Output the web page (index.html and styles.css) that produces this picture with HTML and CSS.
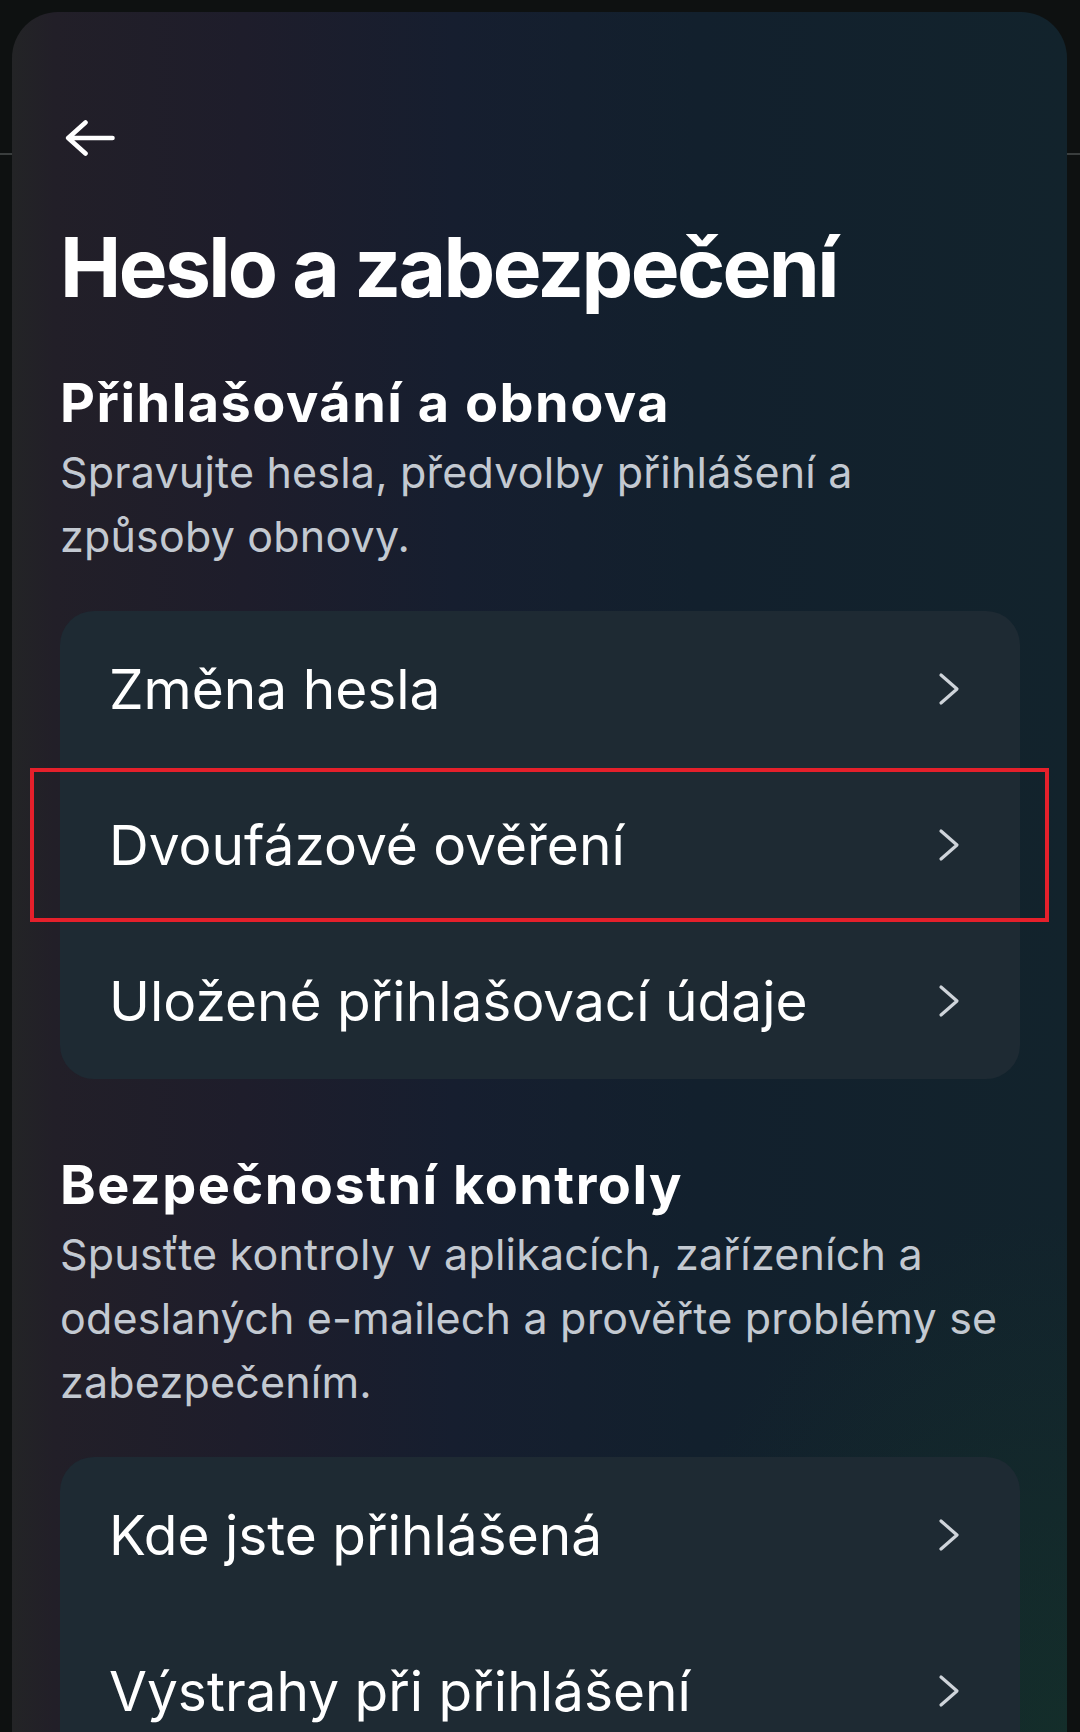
FILE: index.html
```html
<!DOCTYPE html>
<html lang="cs">
<head>
<meta charset="utf-8">
<title>Heslo a zabezpečení</title>
<link rel="stylesheet" href="styles.css">
</head>
<body>
<main class="panel">
  <button class="back" aria-label="Zpět">
    <svg width="50" height="36" viewBox="0 0 50 36" fill="none" stroke="#ffffff" stroke-width="4.6" stroke-linecap="round" stroke-linejoin="round"><path d="M47.5 18 H3.5 M20.5 2.5 L3.2 18 L20.5 33.5"/></svg>
  </button>
  <h1 class="title">Heslo a zabezpečení</h1>

  <section class="group group-first">
    <h2 class="group-title">Přihlašování a obnova</h2>
    <p class="group-desc">Spravujte hesla, předvolby přihlášení a způsoby obnovy.</p>
    <ul class="card">
      <li class="row"><span class="row-label">Změna hesla</span><svg class="chev" width="22" height="34" viewBox="0 0 22 34" fill="none"><path d="M3 3 L19 17 L3 31"/></svg></li>
      <li class="row row-marked"><span class="row-label">Dvoufázové ověření</span><svg class="chev" width="22" height="34" viewBox="0 0 22 34" fill="none"><path d="M3 3 L19 17 L3 31"/></svg></li>
      <li class="row"><span class="row-label">Uložené přihlašovací údaje</span><svg class="chev" width="22" height="34" viewBox="0 0 22 34" fill="none"><path d="M3 3 L19 17 L3 31"/></svg></li>
    </ul>
  </section>

  <section class="group group-second">
    <h2 class="group-title">Bezpečnostní kontroly</h2>
    <p class="group-desc">Spusťte kontroly v aplikacích, zařízeních a odeslaných e-mailech a prověřte problémy se zabezpečením.</p>
    <ul class="card">
      <li class="row"><span class="row-label">Kde jste přihlášená</span><svg class="chev" width="22" height="34" viewBox="0 0 22 34" fill="none"><path d="M3 3 L19 17 L3 31"/></svg></li>
      <li class="row"><span class="row-label">Výstrahy při přihlášení</span><svg class="chev" width="22" height="34" viewBox="0 0 22 34" fill="none"><path d="M3 3 L19 17 L3 31"/></svg></li>
    </ul>
  </section>
</main>
</body>
</html>
```

FILE: styles.css
```css
* { box-sizing: border-box; }
html, body { margin: 0; padding: 0; }
body {
  width: 1080px;
  height: 1732px;
  overflow: hidden;
  background: linear-gradient(to bottom, #0e1111 0, #0e1111 153px, #3a3e3e 153px, #3a3e3e 155px, #0e1111 155px);
  font-family: Inter, "Noto Sans", sans-serif;
  color: #ffffff;
}
.panel {
  margin: 12px 13px 0 12px;
  height: 1720px;
  border-radius: 46px 46px 0 0;
  padding: 108px 47px 0 48px;
  background:
    radial-gradient(ellipse 420px 520px at 100% 100%, rgba(22, 58, 40, 0.45), rgba(22, 58, 40, 0) 100%),
    linear-gradient(90deg, #232426 0%, #221f28 4%, #1e1d2b 22%, #161e2f 42%, #12202d 65%, #12232c 100%);
  overflow: hidden;
}
.back {
  display: block;
  margin: 0 0 62px 5px;
  padding: 0;
  border: 0;
  background: none;
  width: 50px;
  height: 36px;
}
.back svg { display: block; }
.title {
  margin: 0;
  font-size: 82px;
  line-height: 100px;
  font-weight: 700;
  letter-spacing: -2.6px;
}
.group-first { margin-top: 54px; }
.group-second { margin-top: 75px; }
.group-title {
  margin: 0;
  font-size: 54px;
  line-height: 62px;
  font-weight: 700;
  letter-spacing: 1.5px;
}
.group-desc {
  margin: 6px 0 0 0;
  font-size: 43px;
  line-height: 64px;
  color: #c3c9d1;
  letter-spacing: 0.2px;
}
.card {
  list-style: none;
  margin: 43px 0 0 0;
  padding: 0;
  background: #1e2a33;
  border-radius: 34px;
}
.row {
  position: relative;
  display: flex;
  align-items: center;
  justify-content: space-between;
  height: 156px;
  padding: 0 60px 0 49px;
}
.row-label {
  font-size: 55px;
  line-height: 66px;
  font-weight: 400;
}
.chev { display: block; }
.chev path {
  stroke: #cfd4da;
  stroke-width: 3.2;
  stroke-linecap: round;
  stroke-linejoin: round;
}
.row-marked::after {
  content: "";
  position: absolute;
  left: -30px;
  right: -29px;
  top: 1px;
  height: 146px;
  border: 4px solid #e5202b;
}
```
